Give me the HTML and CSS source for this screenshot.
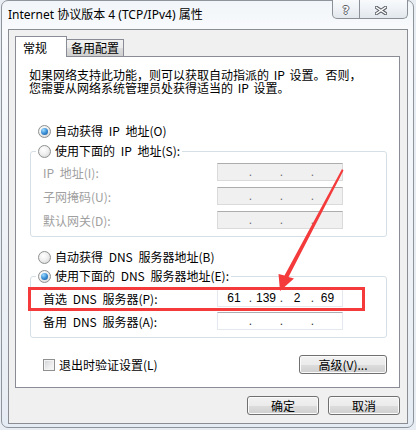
FILE: index.html
```html
<!DOCTYPE html>
<html lang="zh-CN">
<head>
    <meta charset="UTF-8">
    <title>Internet 协议版本 4 (TCP/IPv4) 属性</title>
    <link rel="stylesheet" href="styles.css">
</head>
<body>
<div class="window">
    <!--标题栏-->
    <div class="titlebar">
        <span class="title">Internet 协议版本 4 (TCP/IPv4) 属性</span>
        <div class="caption">
            <span class="cbtn help">?</span>
            <span class="cbtn close">
                <svg width="12" height="9" viewBox="0 0 12 9">
                    <path d="M1.5 1.5 L10.5 7.5 M10.5 1.5 L1.5 7.5" stroke="#5a5e66" stroke-width="3.4" stroke-linecap="square"/>
                    <path d="M1.5 1.5 L10.5 7.5 M10.5 1.5 L1.5 7.5" stroke="#fff" stroke-width="1.4" stroke-linecap="square"/>
                </svg>
            </span>
        </div>
    </div>

    <!--对话框内容-->
    <div class="client">
        <ul class="tabs">
            <li class="current">常规</li>
            <li>备用配置</li>
        </ul>

        <div class="panel">
            <p class="desc">如果网络支持此功能，则可以获取自动指派的 IP 设置。否则，<br>您需要从网络系统管理员处获得适当的 IP 设置。</p>

            <label class="opt first"><span class="radio checked"></span>自动获得 IP 地址(O)</label>

            <fieldset class="group">
                <legend class="opt"><span class="radio"></span>使用下面的 IP 地址(S):</legend>
                <div class="fields disabled">
                    <span>IP 地址(I):</span>
                    <div class="ip"><span></span><i>.</i><span></span><i>.</i><span></span><i>.</i><span></span></div>
                    <span>子网掩码(U):</span>
                    <div class="ip"><span></span><i>.</i><span></span><i>.</i><span></span><i>.</i><span></span></div>
                    <span>默认网关(D):</span>
                    <div class="ip"><span></span><i>.</i><span></span><i>.</i><span></span><i>.</i><span></span></div>
                </div>
            </fieldset>

            <label class="opt dns-auto"><span class="radio"></span>自动获得 DNS 服务器地址(B)</label>

            <fieldset class="group dns-group">
                <legend class="opt"><span class="radio checked"></span>使用下面的 DNS 服务器地址(E):</legend>
                <div class="fields dns">
                    <span>首选 DNS 服务器(P):</span>
                    <div class="ip"><span>61</span><i>.</i><span>139</span><i>.</i><span>2</span><i>.</i><span>69</span></div>
                    <span>备用 DNS 服务器(A):</span>
                    <div class="ip"><span></span><i>.</i><span></span><i>.</i><span></span><i>.</i><span></span></div>
                </div>
            </fieldset>

            <div class="extra">
                <label class="check"><span class="box"></span>退出时验证设置(L)</label>
                <button class="btn wide">高级(V)...</button>
            </div>
        </div>

        <div class="actions">
            <button class="btn">确定</button>
            <button class="btn">取消</button>
        </div>
    </div>
</div>

<!--标注-->
<svg class="marks" width="416" height="430" viewBox="0 0 416 430">
    <rect x="29.5" y="288.5" width="334" height="21" fill="none" stroke="#f53a3c" stroke-width="3"/>
    <polygon points="342,169 343.5,170.5 288.5,277 294,278.5 280,291 278.5,274 284.5,275.5" fill="#f53a3c"/>
</svg>
</body>
</html>
```

FILE: styles.css
```css
*{
    margin: 0;
    padding: 0;
    list-style: none;
    box-sizing: border-box;
}

body{
    width: 416px;
    height: 430px;
    position: relative;
    overflow: hidden;
    background-color: #e8edf3;
    font-family: "Noto Sans CJK SC", sans-serif;
    font-size: 12px;
    color: #000;
}

/*窗口外框*/
.window{
    width: 413px;
    height: 428px;
    margin-left: 1px;
    padding: 0 5px 0 6px;
    border: 1px solid #8e949b;
    border-radius: 7px;
    background: linear-gradient(180deg, #f1f5f9 0, #f8fafc 28px, #eef2f7 60%, #e6ecf3 100%);
}

.titlebar{
    height: 28px;
    display: flex;
    align-items: flex-start;
}

.title{
    line-height: 28px;
    font-family: "Noto Sans", "Noto Sans CJK SC", sans-serif;
    font-size: 12px;
}

.caption{
    margin-left: auto;
    margin-top: -1px;
    height: 19px;
    display: flex;
    border: 1px solid #8b9098;
    border-top: none;
    border-radius: 0 0 5px 5px;
    overflow: hidden;
    background: linear-gradient(180deg, #f8fafc 0, #eef2f6 50%, #e2e7ed 100%);
}

.cbtn{
    height: 18px;
    display: flex;
    justify-content: center;
    align-items: center;
    padding-top: 3px;
}

.help{
    width: 27px;
    border-right: 1px solid #8b9098;
    font-family: "DejaVu Sans", sans-serif;
    font-weight: bold;
    font-size: 11px;
    color: #fff;
    text-shadow: 1px 0 #5a5e66, -1px 0 #5a5e66, 0 1px #5a5e66, 0 -1px #5a5e66;
}

.close{
    width: 47px;
    padding-right: 6px;
}

/*对话框区域*/
.client{
    height: 395px;
    padding: 6px 7px 0 6px;
    border: 1px solid #8a8d92;
    background-color: #f0f0f0;
}

.tabs{
    height: 20px;
    display: flex;
    align-items: flex-end;
}

.tabs li{
    height: 17px;
    padding: 0 4px;
    line-height: 15px;
    border: 1px solid #898c95;
    border-bottom: none;
    border-left: none;
    background: linear-gradient(180deg, #f2f2f2 0, #ebebeb 50%, #dddddd 51%, #cfcfcf 100%);
}

.tabs li.current{
    position: relative;
    z-index: 1;
    width: 52px;
    height: 21px;
    margin-bottom: -1px;
    padding: 0 7px;
    line-height: 21px;
    border-left: 1px solid #898c95;
    background: #fff;
}

.panel{
    height: 332px;
    border: 1px solid #898c95;
    background-color: #fff;
    word-spacing: 3px;
}

.desc{
    padding: 11px 0 0 13px;
    line-height: 13px;
    word-spacing: 2px;
}

/*单选项*/
.opt{
    height: 14px;
    line-height: 14px;
    display: flex;
    align-items: center;
    gap: 4px;
}

.panel > .opt{
    margin-left: 22px;
}

.opt.first{
    margin-top: 30px;
}

.opt.dns-auto{
    margin-top: 13px;
}

.radio{
    width: 13px;
    height: 13px;
    border: 1px solid #8e8f8f;
    border-radius: 50%;
    background: radial-gradient(circle at 40% 35%, #ffffff 0, #f0f0f0 45%, #cfcfcf 100%);
    display: flex;
    justify-content: center;
    align-items: center;
}

.radio.checked::after{
    content: "";
    width: 7px;
    height: 7px;
    border-radius: 50%;
    background: radial-gradient(circle at 35% 30%, #9fdcff 0, #3a8fd6 50%, #18508f 100%);
}

/*分组框*/
.group{
    margin: 6px 12px 0 14px;
    padding: 0 0 7px 0;
    min-width: 0;
    border: 1px solid #d5dfe5;
    border-radius: 3px;
}

.group legend{
    margin-left: 5px;
    padding: 0 2px;
}

.dns-group{
    margin-top: 5px;
}

.fields{
    display: grid;
    grid-template-columns: 174px 126px;
    grid-auto-rows: 18px;
    row-gap: 6px;
    align-items: center;
    padding: 5px 0 0 12px;
}

.fields.dns{
    padding-top: 6px;
    row-gap: 5px;
}

.fields.disabled{
    color: #a0a0a0;
}

/*IP 输入框*/
.ip{
    height: 18px;
    display: grid;
    grid-template-columns: 32px 1px 30px 1px 30px 1px 1fr;
    align-items: center;
    border: 1px solid #e3e9ef;
    border-top-color: #abadb3;
    background-color: #fff;
    font-family: "Liberation Sans", sans-serif;
    word-spacing: 0;
    color: #000;
}

.ip span{
    text-align: center;
}

.ip i{
    font-style: normal;
    display: flex;
    justify-content: center;
    color: #333;
}

.disabled .ip{
    border-color: #dadada;
    border-top-color: #adadad;
    background-color: #f0f0f0;
}

.disabled .ip i{
    color: #6d6d6d;
}

/*底部*/
.extra{
    height: 19px;
    margin: 17px 12px 0 27px;
    display: flex;
    justify-content: space-between;
    align-items: center;
}

.check{
    display: flex;
    align-items: center;
    gap: 4px;
}

.box{
    width: 12px;
    height: 12px;
    border: 1px solid #8e8f8f;
    background: linear-gradient(135deg, #cdd1d6 0, #eeeeee 60%, #f8f8f8 100%);
    box-shadow: inset 0 0 0 1px #f4f4f4;
}

.btn{
    width: 72px;
    height: 19px;
    border: 1px solid #707070;
    border-radius: 3px;
    background: linear-gradient(180deg, #f2f2f2 0, #ebebeb 50%, #dddddd 51%, #cfcfcf 100%);
    box-shadow: inset 0 0 0 1px #fbfbfb;
    font-family: "Noto Sans CJK SC", sans-serif;
    font-size: 12px;
    line-height: 16px;
    color: #000;
}

.btn.wide{
    width: 88px;
}

.actions{
    margin-top: 8px;
    display: flex;
    justify-content: flex-end;
    gap: 9px;
}

/*标注层*/
.marks{
    position: absolute;
    left: 0;
    top: 0;
    pointer-events: none;
}
```
